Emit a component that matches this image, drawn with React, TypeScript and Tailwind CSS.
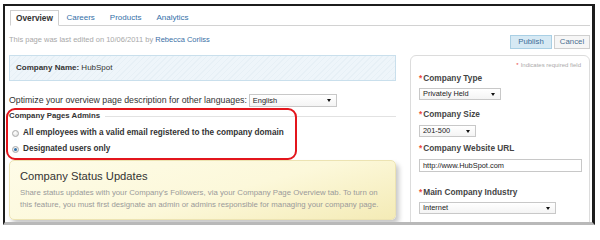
import React from "react";

// Small fake select box with a black down arrow
function SelectBox({ value, width, height = "h-[12px]" }: { value: string; width: string; height?: string }) {
  return (
    <div
      className={`${width} ${height} flex items-center justify-between border border-[#c8c8c8] bg-[linear-gradient(#ffffff,#f4f4f4)] pl-[3px] pr-[5px] text-[7.4px] leading-none text-[#222]`}
    >
      <span>{value}</span>
      <span className="h-0 w-0 border-l-[2.5px] border-r-[2.5px] border-t-[3px] border-l-transparent border-r-transparent border-t-[#111]" />
    </div>
  );
}

function FieldLabel({ label }: { label: string }) {
  return (
    <div className="flex h-[10px] items-center text-[8.3px] font-bold leading-none text-[#444]">
      <span className="mr-[1px] text-[#ea4a3c]">*</span>
      {label}
    </div>
  );
}

function Radio({ checked, label }: { checked?: boolean; label: string }) {
  return (
    <div className="flex h-[12px] items-center pl-[3px]">
      <span className="flex h-[7px] w-[7px] items-center justify-center rounded-full border border-[#a9a9a9] bg-[radial-gradient(circle_at_40%_35%,#ffffff,#d9d9d9)]">
        {checked && <span className="h-[3px] w-[3px] rounded-full bg-[#2f6fa8]" />}
      </span>
      <span className="ml-[4px] text-[8.2px] font-bold leading-none text-[#333]">{label}</span>
    </div>
  );
}

function Tab({ label, active }: { label: string; active?: boolean }) {
  if (active) {
    return (
      <div className="-mb-px flex h-[16px] items-center border border-[#cfcfcf] border-b-white bg-white px-[5px] text-[8.3px] font-bold text-[#333]">
        {label}
      </div>
    );
  }
  return <div className="flex h-[15px] items-center px-[7.5px] text-[8px] text-[#3470a8]">{label}</div>;
}

export default function App() {
  return (
    <div className="relative h-[229px] w-[600px] overflow-hidden bg-white font-['Liberation_Sans',Arial,sans-serif]">
      <div className="ml-[3px] mt-[4px] h-[221px] w-[592px] overflow-hidden border-l-2 border-r-[3px] border-t-2 border-[#1c1c1c] border-b-[3px] border-b-[#b9b9b9] bg-white">
        {/* tabs */}
        <div className="ml-[5px] mr-[2px] mt-[4px] flex h-[16px] items-end border-b border-[#d2d2d2]">
          <Tab label="Overview" active />
          <Tab label="Careers" />
          <Tab label="Products" />
          <Tab label="Analytics" />
        </div>

        {/* edit info + actions */}
        <div className="ml-[4px] mr-[2px] flex h-[29px] items-center justify-between">
          <div className="-mt-[1px] text-[7.5px] text-[#a8a8a8]">
            This page was last edited on 10/06/2011 by <span className="text-[#3a6fa6]">Rebecca Corliss</span>
          </div>
          <div className="mt-[3px] flex gap-[2px]">
            <div className="flex h-[14px] w-[42px] items-center justify-center border border-[#a9cfe4] bg-[#d6e9f4] text-[7.8px] text-[#3b6d98]">
              Publish
            </div>
            <div className="flex h-[14px] w-[36px] items-center justify-center border border-[#cfcfcf] bg-[#f6f6f6] text-[7.8px] text-[#4b6f90]">
              Cancel
            </div>
          </div>
        </div>

        <div className="ml-[4px] flex gap-[14px]">
          {/* left column */}
          <div className="w-[387px]">
            <div className="flex h-[26px] items-center border border-[#c9dfec] bg-[repeating-linear-gradient(135deg,#eef5fa_0px,#eef5fa_3px,#e7f0f6_3px,#e7f0f6_4px)] pl-[6px] text-[8px] text-[#333]">
              <span className="font-bold">Company Name:</span>&nbsp;HubSpot
            </div>

            <div className="mt-[13px] flex h-[13px] items-center">
              <span className="text-[8.75px] text-[#333]">Optimize your overview page description for other languages:</span>
              <div className="ml-[2px]">
                <SelectBox value="English" width="w-[88px]" height="h-[13px]" />
              </div>
            </div>

            <div className="mt-[4px] flex h-[10px] items-center">
              <span className="text-[7.8px] font-bold leading-none text-[#333]">Company Pages Admins</span>
              <span className="ml-[5px] flex-1 border-t border-[#e2e2e2]" />
            </div>
            <div className="mt-[6px]">
              <Radio label="All employees with a valid email registered to the company domain" />
            </div>
            <div className="mt-[4px]">
              <Radio checked label="Designated users only" />
            </div>

            <div className="mt-[5px] h-[60px] rounded-[5px] border border-[#ece3b2] bg-[linear-gradient(165deg,#fefce8_0%,#fcf8da_55%,#f4ebb6_100%)] pl-[10px] pt-[8px] shadow-[3px_4px_5px_rgba(0,0,0,0.22)]">
              <div className="text-[11.2px] leading-[14px] text-[#333]">Company Status Updates</div>
              <p className="mt-[4px] text-[7.8px] leading-[12px] text-[#9a9a9a]">
                Share status updates with your Company's Followers, via your Company Page Overview tab. To turn on
                <br />
                this feature, you must first designate an admin or admins responsible for managing your company page.
              </p>
            </div>
          </div>

          {/* right column */}
          <div className="h-[200px] w-[180px] rounded-t-[6px] border border-[#dcdcdc] pl-[8px] pr-[8px] pt-[5px]">
            <div className="flex h-[8px] items-center justify-end text-[6px] leading-none text-[#ababab]">
              <span className="mr-[2px] text-[#ea4a3c]">*</span>Indicates required field
            </div>
            <div className="mt-[4px]">
              <FieldLabel label="Company Type" />
            </div>
            <div className="mt-[5px]">
              <SelectBox value="Privately Held" width="w-[82px]" />
            </div>
            <div className="mt-[9px]">
              <FieldLabel label="Company Size" />
            </div>
            <div className="mt-[6px]">
              <SelectBox value="201-500" width="w-[57px]" />
            </div>
            <div className="mt-[6px]">
              <FieldLabel label="Company Website URL" />
            </div>
            <div className="mt-[6px] flex h-[13px] w-[163px] items-center border border-[#c8c8c8] bg-white pl-[3px] text-[7.4px] text-[#222]">
              http://www.HubSpot.com
            </div>
            <div className="mt-[15px]">
              <FieldLabel label="Main Company Industry" />
            </div>
            <div className="mt-[5px]">
              <SelectBox value="Internet" width="w-[137px]" />
            </div>
          </div>
        </div>
      </div>

      {/* red annotation */}
      <div className="absolute left-[6px] top-[108px] h-[52px] w-[291px] rounded-[9px] border-2 border-[#e3151c]" />
    </div>
  );
}
